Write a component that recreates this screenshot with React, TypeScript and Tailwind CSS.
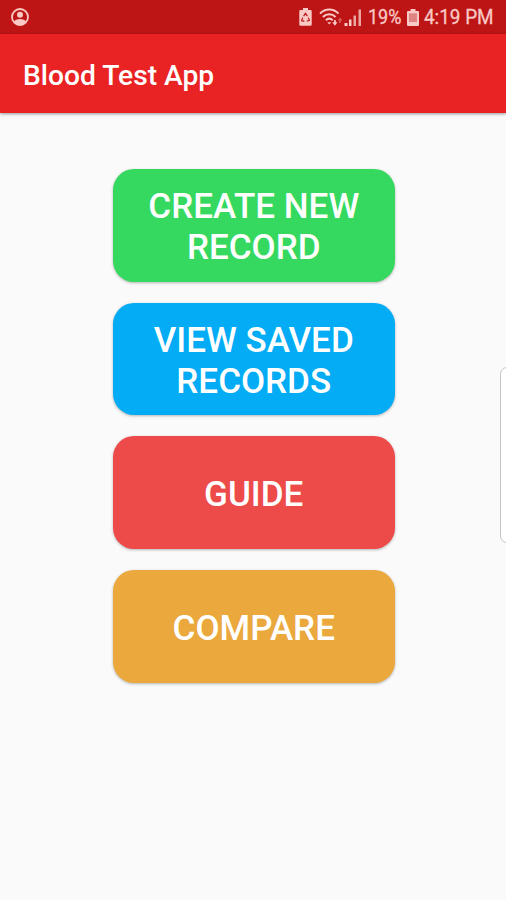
import React from 'react'

type MenuItem = {
    label: string
    color: string
}

const menuItems: MenuItem[] = [
    { label: "CREATE NEW RECORD", color: "bg-[#36d95f]" },
    { label: "VIEW SAVED RECORDS", color: "bg-[#03acf4]" },
    { label: "GUIDE", color: "bg-[#ed4a4a]" },
    { label: "COMPARE", color: "bg-[#eaa83d]" },
]

const AccountIcon = () => (
    <svg width="18" height="18" viewBox="0 0 18 18" fill="none">
        <circle cx="9" cy="9" r="8" stroke="currentColor" strokeWidth="1.8" />
        <circle cx="9" cy="6.7" r="3" fill="currentColor" />
        <path d="M3 13.8C3.800 11.800 6 11 9 11s5.200.8 6 2.800C13.800 16.400 11.500 17.600 9 17.600S4.200 16.400 3 13.800z" fill="currentColor" />
    </svg>
)

const RecycleBatteryIcon = () => (
    <svg width="13" height="18" viewBox="0 0 13 18" fill="none">
        <path d="M4 0h5v2h2.500a1.200 1.200 0 0 1 1.200 1.200v13.300a1.200 1.200 0 0 1-1.200 1.200h-10a1.200 1.200 0 0 1-1.200-1.200V3.200A1.200 1.200 0 0 1 1.500 2H4z" fill="currentColor" />
        <path d="M4.600 8.200 6.500 5.400l1.900 2.800M9.300 9.600l1.100 2.800-2.700.9M5.300 13.300l-2.700-.7 1.100-3" stroke="#bd1515" strokeWidth="1.200" />
    </svg>
)

const WifiIcon = () => (
    <svg width="24" height="19" viewBox="0 0 24 19" fill="none" stroke="currentColor">
        <path d="M1 5.600C6.300.2 14.300.2 19.500 5.600" strokeWidth="2" />
        <path d="M3.900 9c3.600-3.700 9-3.700 12.700 0" strokeWidth="2" />
        <path d="M6.900 12.200c2-1.900 4.800-1.900 6.800 0" strokeWidth="2" />
        <path d="M8.300 14.200h4L10.300 16.500z" fill="currentColor" stroke="none" />
        <path d="M13.300 14.200h5.200L15.900 17.800zM15 12h1.800v3H15z" fill="currentColor" stroke="none" />
        <path d="M18.600 12.600 21 9.400l2.400 3.200zM20.200 12h1.600v3h-1.600z" fill="currentColor" stroke="none" opacity="0.4" />
    </svg>
)

const SignalIcon = () => (
    <svg width="19" height="17" viewBox="0 0 19 17" fill="currentColor">
        <rect x="0.500" y="14" width="3" height="3" />
        <rect x="5" y="10.500" width="2.500" height="6.500" />
        <rect x="9.500" y="6.500" width="2.500" height="10.500" opacity="0.800" />
        <rect x="14.500" y="0.500" width="2.500" height="16.500" opacity="0.800" />
    </svg>
)

const BatteryIcon = () => (
    <svg width="12" height="17" viewBox="0 0 12 17">
        <path d="M3.500 0h5v2H11a1 1 0 0 1 1 1v13a1 1 0 0 1-1 1H1a1 1 0 0 1-1-1V3a1 1 0 0 1 1-1h2.500z" fill="currentColor" />
        <rect x="2" y="4.300" width="8" height="8.700" fill="#df8383" />
    </svg>
)

const StatusBar = () => (
    <div className="flex h-[34px] items-center justify-between bg-[#bd1515] pl-[11px] pr-3 text-[#f9c9c5]">
        <AccountIcon />
        <div className="flex items-center text-[20px] leading-none">
            <RecycleBatteryIcon />
            <div className="ml-[7px]"><WifiIcon /></div>
            <div className="ml-px"><SignalIcon /></div>
            <div className="ml-[5px] w-[36px] whitespace-nowrap"><div className="origin-left scale-x-[0.9] [-webkit-text-stroke:0.3px]">19%</div></div>
            <div className="ml-[3px]"><BatteryIcon /></div>
            <div className="ml-[5px] w-[70px] whitespace-nowrap"><div className="origin-left scale-x-[0.945] [-webkit-text-stroke:0.3px]">4:19 PM</div></div>
        </div>
    </div>
)

const App = () => {
    return (
        <div className="relative h-[900px] w-[506px] overflow-hidden bg-[#fafafa] font-['Roboto',sans-serif]">
            <StatusBar />
            <header className="flex h-[79px] items-center bg-[#e92323] pl-[23px] pt-[5px] shadow-[0_1px_3px_rgba(0,0,0,0.4)]">
                <h1 className="text-[28.200px] font-medium leading-none text-white">Blood Test App</h1>
            </header>
            <main className="flex flex-col items-center gap-[21.200px] pl-[1.500px] pt-14">
                {menuItems.map((item) => (
                    <button
                        key={item.label}
                        className={`${item.color} h-[112.500px] w-[281.500px] rounded-[21px] px-7 pt-[4px] text-[35px] font-medium leading-[41px] text-white shadow-[0_1px_3px_rgba(0,0,0,0.28)]`}
                    >
                        {item.label}
                    </button>
                ))}
            </main>
            {/* edge panel handle */}
            <div className="absolute -right-3 top-[367px] h-[176px] w-[18px] rounded-[7px] border border-[#c4c4c4] bg-white" />
        </div>
    )
}

export default App
